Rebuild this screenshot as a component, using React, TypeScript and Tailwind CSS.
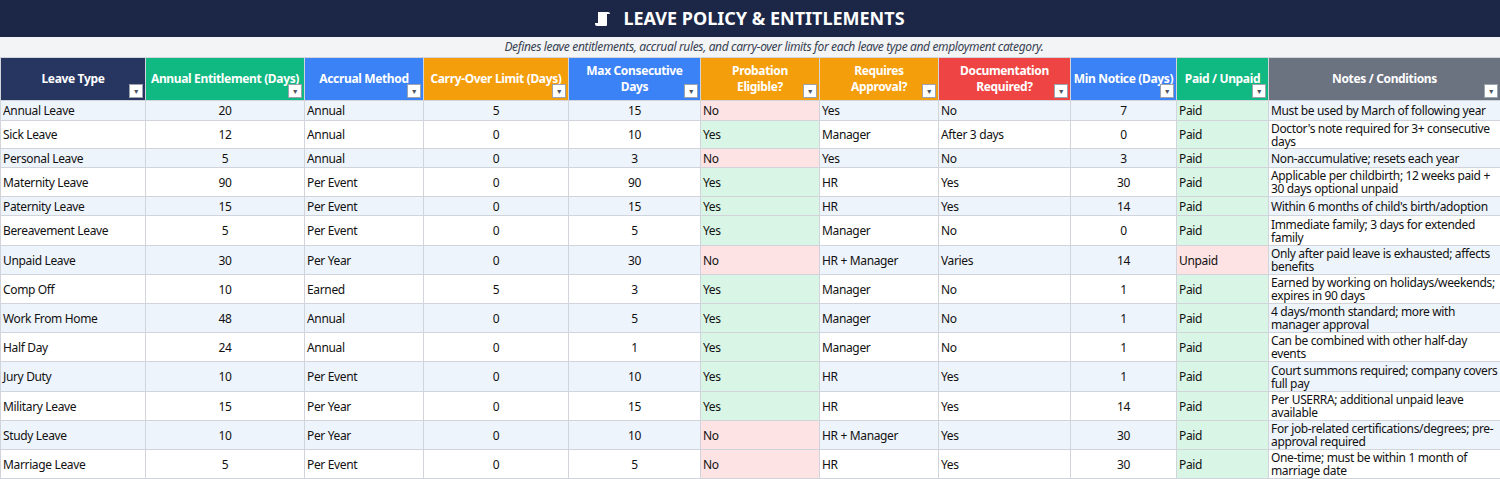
const cols = [
  { name: 'Leave Type', w: 145, bg: 'bg-[#263661]' },
  { name: 'Annual Entitlement (Days)', w: 159, bg: 'bg-[#10b981]' },
  { name: 'Accrual Method', w: 119, bg: 'bg-[#3b82f6]' },
  { name: 'Carry-Over Limit (Days)', w: 145, bg: 'bg-[#f59e0b]' },
  { name: 'Max Consecutive Days', w: 132, bg: 'bg-[#3b82f6]' },
  { name: 'Probation Eligible?', w: 119, bg: 'bg-[#f59e0b]' },
  { name: 'Requires Approval?', w: 119, bg: 'bg-[#f59e0b]' },
  { name: 'Documentation Required?', w: 132, bg: 'bg-[#ef4444]' },
  { name: 'Min Notice (Days)', w: 106, bg: 'bg-[#3b82f6]' },
  { name: 'Paid / Unpaid', w: 92, bg: 'bg-[#10b981]' },
  { name: 'Notes / Conditions', w: 232, bg: 'bg-[#6b7280]' },
]

const rows: [string, number, string, number, number, string, string, string, number, string, string, number][] = [
  ['Annual Leave', 20, 'Annual', 5, 15, 'No', 'Yes', 'No', 7, 'Paid', 'Must be used by March of following year', 20],
  ['Sick Leave', 12, 'Annual', 0, 10, 'Yes', 'Manager', 'After 3 days', 0, 'Paid', "Doctor's note required for 3+ consecutive days", 28],
  ['Personal Leave', 5, 'Annual', 0, 3, 'No', 'Yes', 'No', 3, 'Paid', 'Non-accumulative; resets each year', 19],
  ['Maternity Leave', 90, 'Per Event', 0, 90, 'Yes', 'HR', 'Yes', 30, 'Paid', 'Applicable per childbirth; 12 weeks paid + 30 days optional unpaid', 29],
  ['Paternity Leave', 15, 'Per Event', 0, 15, 'Yes', 'HR', 'Yes', 14, 'Paid', "Within 6 months of child's birth/adoption", 19],
  ['Bereavement Leave', 5, 'Per Event', 0, 5, 'Yes', 'Manager', 'No', 0, 'Paid', 'Immediate family; 3 days for extended family', 30],
  ['Unpaid Leave', 30, 'Per Year', 0, 30, 'No', 'HR + Manager', 'Varies', 14, 'Unpaid', 'Only after paid leave is exhausted; affects benefits', 29],
  ['Comp Off', 10, 'Earned', 5, 3, 'Yes', 'Manager', 'No', 1, 'Paid', 'Earned by working on holidays/weekends; expires in 90 days', 29],
  ['Work From Home', 48, 'Annual', 0, 5, 'Yes', 'Manager', 'No', 1, 'Paid', '4 days/month standard; more with manager approval', 29],
  ['Half Day', 24, 'Annual', 0, 1, 'Yes', 'Manager', 'No', 1, 'Paid', 'Can be combined with other half-day events', 29],
  ['Jury Duty', 10, 'Per Event', 0, 10, 'Yes', 'HR', 'Yes', 1, 'Paid', 'Court summons required; company covers full pay', 30],
  ['Military Leave', 15, 'Per Year', 0, 15, 'Yes', 'HR', 'Yes', 14, 'Paid', 'Per USERRA; additional unpaid leave available', 29],
  ['Study Leave', 10, 'Per Year', 0, 10, 'No', 'HR + Manager', 'Yes', 30, 'Paid', 'For job-related certifications/degrees; pre-approval required', 29],
  ['Marriage Leave', 5, 'Per Event', 0, 5, 'No', 'HR', 'Yes', 30, 'Paid', 'One-time; must be within 1 month of marriage date', 29],
]

function Filter() {
  return (
    <span className="absolute bottom-[2px] right-[2px] flex h-[14px] w-[14px] items-center justify-center border border-[#9ca3af] bg-white text-[7px] leading-none text-[#4b5563]">
      ▼
    </span>
  )
}

export default function App() {
  return (
    <div className="w-[1500px] overflow-hidden bg-white font-['Liberation_Sans_Narrow','Liberation_Sans',sans-serif] text-[12px] tracking-[-0.35px] text-[#111]">
      <div className="flex h-[37px] items-center justify-center gap-3 bg-[#1c2748] text-[18px] font-bold tracking-normal text-white">
        <svg width="16" height="16" viewBox="0 0 16 16" fill="white">
          <path d="M3 1h10v2h-1v11a1 1 0 0 1-1 1H2a2 2 0 0 1-2-2v-1h3V1zm-3 12h8v1H1a1 1 0 0 1-1-1zM13 1a2 2 0 0 1 2 2h-3V1z" />
        </svg>
        LEAVE POLICY &amp; ENTITLEMENTS
      </div>
      <div className="flex h-[20px] items-center justify-center bg-[#f3f4f6] pl-[48px] text-[12px] italic text-[#374151]">
        Defines leave entitlements, accrual rules, and carry-over limits for each leave type and employment category.
      </div>
      <table className="table-fixed border-collapse" style={{ width: 1500 }}>
        <colgroup>
          {cols.map((c) => (
            <col key={c.name} style={{ width: c.w }} />
          ))}
        </colgroup>
        <thead>
          <tr className="h-[43px]">
            {cols.map((c) => (
              <th
                key={c.name}
                className={`${c.bg} relative border border-[#d1d5db] p-0 text-center text-[12px] font-bold leading-[16px] text-white`}
              >
                <div className="mx-auto" style={{ maxWidth: c.w > 140 ? c.w : 104 }}>{c.name}</div>
                <Filter />
              </th>
            ))}
          </tr>
        </thead>
        <tbody>
          {rows.map((r, i) => {
            const shade = i % 2 === 0 ? 'bg-[#eef4fb]' : 'bg-white'
            const td = 'border border-[#d1d5db] px-[2px] py-0 leading-[13px] align-middle'
            return (
              <tr key={r[0]} style={{ height: r[11] }}>
                <td className={`${td} ${shade}`}>{r[0]}</td>
                <td className={`${td} ${shade} text-center`}>{r[1]}</td>
                <td className={`${td} ${shade}`}>{r[2]}</td>
                <td className={`${td} ${shade} text-center`}>{r[3]}</td>
                <td className={`${td} ${shade} text-center`}>{r[4]}</td>
                <td className={`${td} ${r[5] === 'Yes' ? 'bg-[#d9f5e6]' : 'bg-[#fde3e3]'}`}>{r[5]}</td>
                <td className={`${td} ${shade}`}>{r[6]}</td>
                <td className={`${td} ${shade}`}>{r[7]}</td>
                <td className={`${td} ${shade} text-center`}>{r[8]}</td>
                <td className={`${td} ${r[9] === 'Paid' ? 'bg-[#d9f5e6]' : 'bg-[#fde3e3]'}`}>{r[9]}</td>
                <td className={`${td} ${shade}`}>{r[10]}</td>
              </tr>
            )
          })}
        </tbody>
      </table>
    </div>
  )
}
